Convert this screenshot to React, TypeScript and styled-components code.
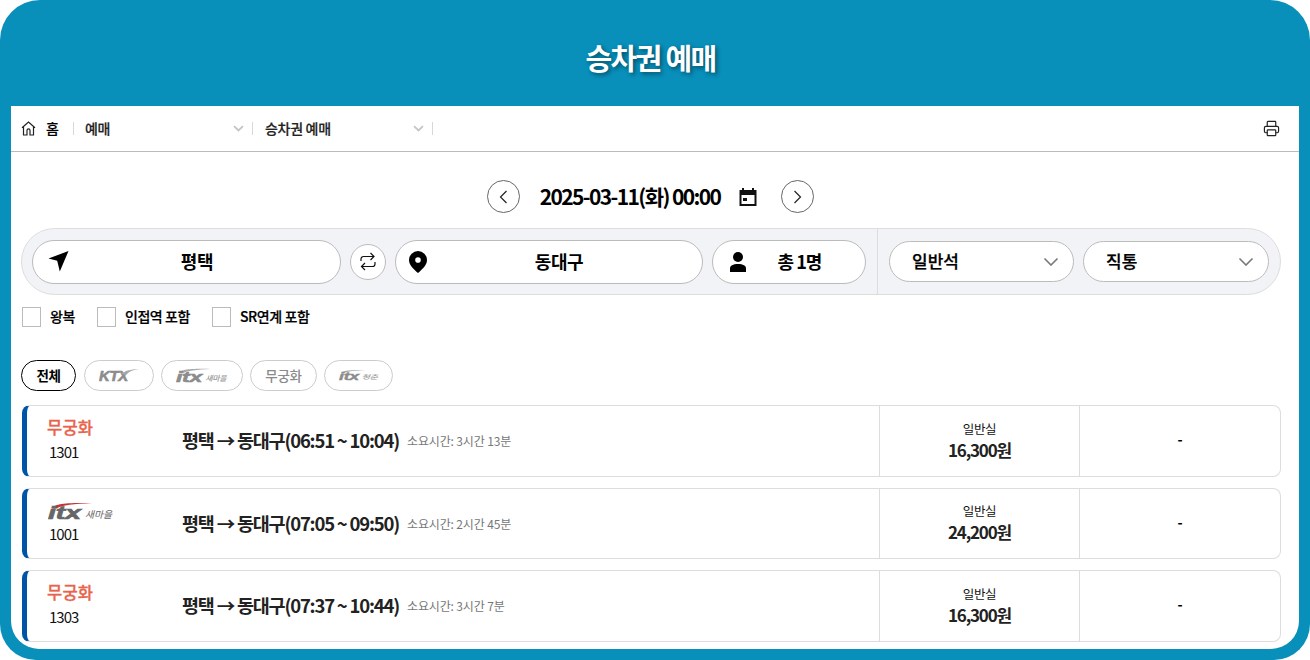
import React from "react";
import styled, { createGlobalStyle } from "styled-components";
import { Printer } from "lucide-react";

const GlobalStyle = createGlobalStyle`
  html, body {
    margin: 0;
    padding: 0;
    background: #fff;
    overflow: hidden;
  }
  * { box-sizing: border-box; }
  body {
    font-family: "Noto Sans CJK KR", "Noto Sans", sans-serif;
    color: #000;
  }
`;

const Frame = styled.div`
  width: 1310px;
  height: 660px;
  background: #088fba;
  border-radius: 40px 40px 36px 36px;
  padding: 0 11px 11px;
  display: flex;
  flex-direction: column;
  overflow: hidden;
`;

const Title = styled.h1`
  margin: 0;
  height: 106px;
  flex: none;
  display: flex;
  align-items: center;
  justify-content: center;
  padding: 7px 9px 0 0;
  color: #fff;
  font-size: 29px;
  font-weight: 700;
  letter-spacing: -1.7px;
  text-shadow: 2px 2px 4px rgba(0, 0, 0, 0.45);
`;

const Panel = styled.main`
  flex: 1;
  min-height: 0;
  background: #fff;
  border-radius: 0 0 28px 28px;
  overflow: hidden;
`;

const Crumbs = styled.nav`
  height: 46px;
  display: flex;
  align-items: center;
  border-bottom: 1px solid #bbb;
  padding: 0 19px 0 10px;
`;

const HomeLink = styled.span`
  display: flex;
  align-items: center;
  gap: 10px;
  width: 52px;
  font-size: 14px;
  line-height: 18px;
  padding-bottom: 1px;
  font-weight: 500;
  letter-spacing: -0.3px;
  -webkit-text-stroke: 0.2px #222;
`;

const CrumbItem = styled.span<{ $width: number }>`
  width: ${(p) => p.$width}px;
  height: 13px;
  display: flex;
  align-items: center;
  justify-content: space-between;
  padding: 0 8px 0 11px;
  border-left: 1px solid #d8d8d8;
  font-size: 14px;
  font-weight: 500;
  letter-spacing: -0.3px;
  color: #222;
  &:nth-of-type(3) {
    padding-left: 12px;
  }
`;

const CrumbLabel = styled.span`
  padding-bottom: 2px;
  -webkit-text-stroke: 0.2px #222;
`;

const CrumbEnd = styled.span`
  flex: 1;
  height: 13px;
  border-left: 1px solid #d8d8d8;
  display: flex;
  align-items: center;
  justify-content: flex-end;
`;

const DateRow = styled.div`
  height: 76px;
  padding: 13px 9px 0 0;
  display: flex;
  align-items: center;
  justify-content: center;
`;

const RoundBtn = styled.button`
  width: 33px;
  height: 33px;
  padding: 0;
  border: 1px solid #666;
  border-radius: 50%;
  background: #fff;
  display: flex;
  align-items: center;
  justify-content: center;
`;

const DateText = styled.strong`
  margin: 0 18px 0 20px;
  font-size: 21px;
  font-weight: 700;
  letter-spacing: -1.6px;
  line-height: 33px;
  white-space: nowrap;
`;

const CalendarSlot = styled.span`
  display: flex;
  margin-right: 23px;
`;

const SearchBar = styled.div`
  margin: 0 18px 0 10px;
  height: 67px;
  background: #f2f3f7;
  border: 1px solid #ddd;
  border-radius: 34px;
  display: flex;
  align-items: center;
  padding: 0 11px 0 10px;
`;

const Field = styled.div<{ $width: number; $pad: number }>`
  width: ${(p) => p.$width}px;
  height: 44px;
  flex: none;
  background: #fff;
  border: 1px solid #bbb;
  border-radius: 22px;
  display: flex;
  align-items: center;
  padding-left: ${(p) => p.$pad}px;
  & + & {
    margin-left: 9px;
  }
`;

const FieldText = styled.span<{ $left?: number; $tight?: boolean }>`
  flex: 1;
  text-align: center;
  font-size: 18px;
  font-weight: 700;
  letter-spacing: ${(p) => (p.$tight ? "-1px" : "-0.4px")};
  padding-right: 16px;
  padding-bottom: 2px;
  padding-left: ${(p) => p.$left ?? 0}px;
`;

const SwapBtn = styled.button`
  width: 36px;
  height: 36px;
  flex: none;
  margin: 0 9px;
  padding: 0;
  border: 1px solid #bbb;
  border-radius: 50%;
  background: #fff;
  display: flex;
  align-items: center;
  justify-content: center;
`;

const Divider = styled.span`
  width: 1px;
  height: 65px;
  flex: none;
  background: #ddd;
  margin: 0 11px;
`;

const SelectBox = styled.div<{ $width: number }>`
  width: ${(p) => p.$width}px;
  height: 41px;
  flex: none;
  background: #fff;
  border: 1px solid #bbb;
  border-radius: 21px;
  display: flex;
  align-items: center;
  justify-content: space-between;
  padding: 0 14px 0 22px;
  font-size: 17px;
  font-weight: 500;
  & + & {
    margin-left: 9px;
  }
`;

const SelectLabel = styled.span`
  padding-bottom: 2px;
  -webkit-text-stroke: 0.25px #000;
`;

const Options = styled.div`
  display: flex;
  align-items: center;
  margin: 12px 0 0 11px;
  height: 20px;
`;

const Check = styled.label`
  display: flex;
  align-items: center;
  gap: 9px;
  margin-right: 22px;
  font-size: 14px;
  font-weight: 500;
  letter-spacing: -0.42px;
`;

const CheckLabel = styled.span`
  padding-bottom: 2px;
  -webkit-text-stroke: 0.2px #000;
`;

const CheckBox = styled.span`
  width: 19px;
  height: 20px;
  background: #fff;
  border: 1px solid #bbb;
`;

const Tabs = styled.div`
  display: flex;
  gap: 7px;
  margin: 33px 0 0 10px;
`;

const Tab = styled.span<{ $active?: boolean; $width: number }>`
  width: ${(p) => p.$width}px;
  height: 31px;
  border: 1px solid ${(p) => (p.$active ? "#000" : "#ccc")};
  ${(p) => p.$active && "border-width: 1.5px; margin-right: 1px;"}
  border-radius: 16px;
  display: flex;
  align-items: center;
  justify-content: center;
  padding-bottom: 2px;
  font-size: 13.5px;
  font-weight: ${(p) => (p.$active ? 700 : 500)};
  letter-spacing: -0.3px;
  color: ${(p) => (p.$active ? "#000" : "#8a8a8a")};
`;

const List = styled.div`
  margin: 14px 18px 0 11px;
  display: flex;
  flex-direction: column;
  gap: 11px;
`;

const Card = styled.article`
  height: 71.5px;
  display: flex;
  border: 1px solid #ddd;
  border-left: 5px solid #0054a6;
  border-radius: 8px;
  background: #fff;
`;

const TrainCol = styled.div`
  width: 155px;
  flex: none;
  padding-left: 20px;
  display: flex;
  flex-direction: column;
`;

const TrainName = styled.span`
  height: 36px;
  display: flex;
  align-items: flex-end;
  padding-bottom: 3px;
  font-size: 16.5px;
  font-weight: 500;
  letter-spacing: 0.2px;
  color: #e8644c;
  -webkit-text-stroke: 0.3px #e8644c;
`;

const LogoSlot = styled.span`
  height: 35px;
  display: flex;
  align-items: flex-end;
  padding-bottom: 2px;
  margin-left: 1px;
`;

const TrainNo = styled.span`
  padding-left: 2px;
  font-size: 15px;
  letter-spacing: -1px;
  line-height: 20px;
  color: #111;
`;

const RouteCol = styled.div`
  flex: 1;
  display: flex;
  align-items: center;
  padding-bottom: 1px;
`;

const Route = styled.strong`
  font-size: 18.5px;
  font-weight: 700;
  letter-spacing: -1.2px;
  color: #222;
  white-space: nowrap;
`;

const Duration = styled.span`
  margin-left: 8px;
  font-size: 12px;
  letter-spacing: -0.15px;
  color: #777;
  padding-top: 1px;
`;

const FareCol = styled.div`
  width: 200px;
  flex: none;
  border-left: 1px solid #ddd;
  display: flex;
  flex-direction: column;
  align-items: center;
  justify-content: center;
`;

const FareClass = styled.span`
  font-size: 12.5px;
  letter-spacing: -0.3px;
  line-height: 18px;
  color: #111;
`;

const FarePrice = styled.strong`
  font-size: 17px;
  font-weight: 700;
  letter-spacing: -1.2px;
  line-height: 24px;
  color: #222;
`;

const EmptyCol = styled.div`
  width: 201px;
  flex: none;
  border-left: 1px solid #ddd;
  display: flex;
  align-items: center;
  justify-content: center;
  font-size: 14px;
  font-weight: 700;
  padding-bottom: 3px;
`;

const Chevron = ({
  color = "#777",
  size = 16,
  weight = 1.6,
}: {
  color?: string;
  size?: number;
  weight?: number;
}) => (
  <svg width={size} height={size * 0.6} viewBox="0 0 16 9.6" fill="none">
    <path d="M1.5 1.5 8 8l6.5-6.5" stroke={color} strokeWidth={weight} />
  </svg>
);

const HomeIcon = () => (
  <svg width="15" height="15" viewBox="0 0 15 15" fill="none" stroke="#222" strokeWidth="1.2">
    <path d="M1 6.8 7.5 1 14 6.8M2.5 5.6V14H6V9.3a1.5 1.5 0 0 1 3 0V14h3.5V5.6" />
  </svg>
);

const CalendarIcon = () => (
  <svg width="20" height="20" viewBox="0 0 20 20">
    <path
      d="M4 1h2v2h8V1h2v2h2.500v16H1.500V3H4zM3.500 8v9h13V8zM5 11h4v3H5z"
      fill="#111"
      fillRule="evenodd"
    />
  </svg>
);

const Arrow = ({ dir }: { dir: "left" | "right" }) => (
  <svg width="9" height="14" viewBox="0 0 9 14" fill="none">
    <path d={dir === "left" ? "M7.500 1 1.500 7l6 6" : "M1.500 1l6 6-6 6"} stroke="#222" strokeWidth="1.2" />
  </svg>
);

const SendIcon = () => (
  <svg width="21" height="21" viewBox="0 0 21 21">
    <path d="M20.500 0 0.500 7.500 9.200 9.700 11.800 20.500z" fill="#000" />
  </svg>
);

const SwapIcon = () => (
  <svg width="16" height="19" viewBox="0 0 16 19" fill="none" stroke="#111" strokeWidth="1.2">
    <path d="M10.500 1l3.500 3.500-3.500 3.500M14 4.500H3.500A2.500 2.500 0 0 0 1 7v2M5 18l-3.500-3.500L5 11M1.500 14.500H12.500A2.500 2.500 0 0 0 15 12v-2" />
  </svg>
);

const PinIcon = () => (
  <svg width="18" height="22" viewBox="0 0 18 22">
    <path
      d="M9 0a9 9 0 0 1 9 9c0 4.600-4 8.800-9 13-5-4.200-9-8.400-9-13a9 9 0 0 1 9-9zm0 6.200a2.800 2.800 0 1 0 0 5.600 2.800 2.800 0 0 0 0-5.600z"
      fill="#000"
      fillRule="evenodd"
    />
  </svg>
);

const PersonIcon = () => (
  <svg width="16" height="20" viewBox="0 0 16 20" fill="#000">
    <circle cx="8" cy="5" r="5" />
    <path d="M0 20v-3.500C0 13.500 3 12 8 12s8 1.500 8 4.500V20z" />
  </svg>
);

// 열차 로고: 글자는 실제 텍스트로 두고 곡선만 그린다
const KtxLogo = () => (
  <svg width="40" height="20" viewBox="0 0 40 20">
    <text
      x="0"
      y="16"
      fontFamily="Liberation Sans"
      fontWeight="700"
      fontStyle="italic"
      fontSize="14"
      fill="#8c8c8c"
      stroke="#8c8c8c"
      strokeWidth="0.6"
      textLength="29"
      lengthAdjust="spacingAndGlyphs"
    >
      KTX
    </text>
    <path d="M22 8.500C28 5.500 33 4 40 4c-6 1-10 2.500-14 6z" fill="#a8a8a8" />
  </svg>
);

const ItxLogo = ({
  width,
  sub,
  tone,
}: {
  width: number;
  sub: string;
  tone: "color" | "gray";
}) => {
  const ink = tone === "color" ? "#666" : "#8c8c8c";
  return (
    <svg width={width} height={(width * 24) / 66} viewBox="0 0 66 24">
      <path
        d="M4 10.500C7 6 14 4.500 44 5 26 6 14 7 8.500 10.500z"
        fill={tone === "color" ? "#c8323a" : "#a8a8a8"}
      />
      <text
        x="0"
        y="21"
        fontFamily="Liberation Sans"
        fontWeight="700"
        fontStyle="italic"
        fontSize="19"
        fill={ink}
        stroke={ink}
        strokeWidth="0.7"
        textLength="33"
        lengthAdjust="spacingAndGlyphs"
      >
        itx
      </text>
      <text
        x="37"
        y="20"
        fontFamily="Noto Sans CJK KR"
        fontStyle="italic"
        fontSize="9.500"
        fill={tone === "color" ? "#666" : "#999"}
        textLength="27"
        lengthAdjust="spacingAndGlyphs"
      >
        {sub}
      </text>
    </svg>
  );
};

const trains = [
  { no: "1301", logo: false, route: "평택 → 동대구(06:51 ~ 10:04)", time: "소요시간: 3시간 13분", fare: "16,300원" },
  { no: "1001", logo: true, route: "평택 → 동대구(07:05 ~ 09:50)", time: "소요시간: 2시간 45분", fare: "24,200원" },
  { no: "1303", logo: false, route: "평택 → 동대구(07:37 ~ 10:44)", time: "소요시간: 3시간 7분", fare: "16,300원" },
];

export default function App() {
  return (
    <Frame>
      <GlobalStyle />
      <Title>승차권 예매</Title>
      <Panel>
        <Crumbs>
          <HomeLink>
            <HomeIcon />홈
          </HomeLink>
          <CrumbItem $width={179}>
            <CrumbLabel>예매</CrumbLabel>
            <Chevron color="#c4c4cc" size={11} weight={2.6} />
          </CrumbItem>
          <CrumbItem $width={180}>
            <CrumbLabel>승차권 예매</CrumbLabel>
            <Chevron color="#c4c4cc" size={11} weight={2.6} />
          </CrumbItem>
          <CrumbEnd>
            <Printer size={17} strokeWidth={1.7} color="#222" />
          </CrumbEnd>
        </Crumbs>

        <DateRow>
          <RoundBtn aria-label="이전 날짜">
            <Arrow dir="left" />
          </RoundBtn>
          <DateText>2025-03-11(화) 00:00</DateText>
          <CalendarSlot>
            <CalendarIcon />
          </CalendarSlot>
          <RoundBtn aria-label="다음 날짜">
            <Arrow dir="right" />
          </RoundBtn>
        </DateRow>

        <SearchBar>
          <Field $width={309} $pad={15}>
            <SendIcon />
            <FieldText $left={1}>평택</FieldText>
          </Field>
          <SwapBtn aria-label="출발 도착 바꾸기">
            <SwapIcon />
          </SwapBtn>
          <Field $width={308} $pad={13}>
            <PinIcon />
            <FieldText $left={5}>동대구</FieldText>
          </Field>
          <Field $width={154} $pad={17}>
            <PersonIcon />
            <FieldText $left={4} $tight>총 1명</FieldText>
          </Field>
          <Divider />
          <SelectBox $width={185}>
            <SelectLabel>일반석</SelectLabel>
            <Chevron />
          </SelectBox>
          <SelectBox $width={186}>
            <SelectLabel>직통</SelectLabel>
            <Chevron />
          </SelectBox>
        </SearchBar>

        <Options>
          <Check>
            <CheckBox />
            <CheckLabel>왕복</CheckLabel>
          </Check>
          <Check>
            <CheckBox />
            <CheckLabel>인접역 포함</CheckLabel>
          </Check>
          <Check>
            <CheckBox />
            <CheckLabel>SR연계 포함</CheckLabel>
          </Check>
        </Options>

        <Tabs>
          <Tab $active $width={55}>전체</Tab>
          <Tab $width={70}><KtxLogo /></Tab>
          <Tab $width={82}><ItxLogo width={52} sub="새마을" tone="gray" /></Tab>
          <Tab $width={67}>무궁화</Tab>
          <Tab $width={69}><ItxLogo width={40} sub="청춘" tone="gray" /></Tab>
        </Tabs>

        <List>
          {trains.map((t) => (
            <Card key={t.no}>
              <TrainCol>
                {t.logo ? (
                  <LogoSlot>
                    <ItxLogo width={66} sub="새마을" tone="color" />
                  </LogoSlot>
                ) : (
                  <TrainName>무궁화</TrainName>
                )}
                <TrainNo>{t.no}</TrainNo>
              </TrainCol>
              <RouteCol>
                <Route>{t.route}</Route>
                <Duration>{t.time}</Duration>
              </RouteCol>
              <FareCol>
                <FareClass>일반실</FareClass>
                <FarePrice>{t.fare}</FarePrice>
              </FareCol>
              <EmptyCol>-</EmptyCol>
            </Card>
          ))}
        </List>
      </Panel>
    </Frame>
  );
}
